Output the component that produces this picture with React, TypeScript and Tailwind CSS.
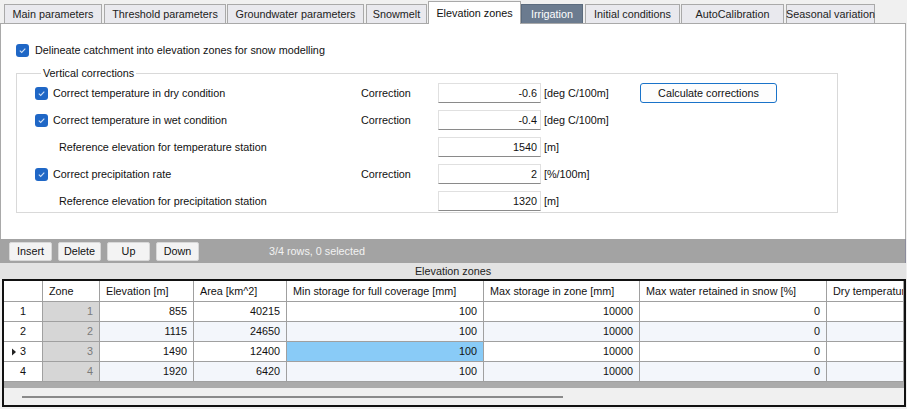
import React from "react";

const tabs = [
  { label: "Main parameters", w: 98, ml: 4 },
  { label: "Threshold parameters", w: 122, ml: 2 },
  { label: "Groundwater parameters", w: 137, ml: 1 },
  { label: "Snowmelt", w: 61, ml: 2 },
  { label: "Elevation zones", w: 93, ml: 1, active: true },
  { label: "Irrigation", w: 62, ml: 0, dark: true },
  { label: "Initial conditions", w: 95, ml: 2 },
  { label: "AutoCalibration", w: 103, ml: 1 },
  { label: "Seasonal variation", w: 89, ml: 2 },
];

function Check() {
  return (
    <span className="w-[13px] h-[13px] rounded-[3px] bg-[#1f67c6] flex items-center justify-center shrink-0">
      <svg width="9" height="9" viewBox="0 0 9 9">
        <path d="M1.8 4.6 L3.7 6.4 L7.3 2.6" fill="none" stroke="#cfe0f6" strokeWidth="1.1" />
      </svg>
    </span>
  );
}

function Input({ value }: { value: string }) {
  return (
    <div className="w-[103px] h-[20px] bg-white border border-[#e0e0e0] border-b-[#8a8a8a] flex items-center justify-end pr-[3px]">
      {value}
    </div>
  );
}

type RowProps = {
  checked?: boolean;
  label: string;
  correction?: boolean;
  value: string;
  unit: string;
  button?: boolean;
};

function ParamRow({ checked, label, correction, value, unit, button }: RowProps) {
  return (
    <div className="flex items-center h-[20px]">
      <div className="w-[326px] flex items-center">
        {checked ? (
          <>
            <Check />
            <span className="ml-[5px]">{label}</span>
          </>
        ) : (
          <span className="ml-[24px]">{label}</span>
        )}
      </div>
      <div className="w-[77px]">{correction ? "Correction" : ""}</div>
      <Input value={value} />
      <div className="w-[99px] pl-[3px]">{unit}</div>
      {button && (
        <div className="w-[137px] h-[20px] rounded-[3px] border border-[#1a73c9] bg-[#fdfdfd] flex items-center justify-center">
          Calculate corrections
        </div>
      )}
    </div>
  );
}

const cols = [
  { title: "", w: 39 },
  { title: "Zone", w: 57 },
  { title: "Elevation [m]", w: 94 },
  { title: "Area [km^2]", w: 93 },
  { title: "Min storage for full coverage [mm]", w: 197 },
  { title: "Max storage in zone [mm]", w: 156 },
  { title: "Max water retained in snow [%]", w: 187 },
  { title: "Dry temperature", w: 77 },
];

const rows = [
  ["1", "1", "855", "40215", "100", "10000", "0", ""],
  ["2", "2", "1115", "24650", "100", "10000", "0", ""],
  ["3", "3", "1490", "12400", "100", "10000", "0", ""],
  ["4", "4", "1920", "6420", "100", "10000", "0", ""],
];

function ToolBtn({ label, w }: { label: string; w: number }) {
  return (
    <div
      className="h-[19px] rounded-[2px] bg-[#f3f3f3] border border-[#d8d8d8] flex items-center justify-center"
      style={{ width: w }}
    >
      {label}
    </div>
  );
}

export default function App() {
  return (
    <div
      className="w-[907px] h-[409px] bg-[#f0f0f0] flex flex-col text-[10.8px] text-[#111] overflow-hidden"
      style={{ fontFamily: '"Liberation Sans", Arial, sans-serif' }}
    >
      {/* Tabs */}
      <div className="h-[23px] flex items-end relative z-10">
        {tabs.map((t) => (
          <div
            key={t.label}
            className={
              t.active
                ? "h-[23px] -mb-px bg-white border border-b-0 border-[#a9a9a9] flex items-center justify-center pt-[1px] whitespace-nowrap"
                : t.dark
                ? "h-[19px] bg-[#6b7b8f] text-white border border-b-0 border-[#5b6b7e] flex items-center justify-center whitespace-nowrap"
                : "h-[19px] bg-[#e9e9ee] text-[#222] border border-b-0 border-[#a9a9a9] flex items-center justify-center whitespace-nowrap"
            }
            style={{ width: t.w, marginLeft: t.ml }}
          >
            {t.label}
          </div>
        ))}
      </div>

      {/* Panel */}
      <div className="h-[216px] w-[906px] bg-white border border-b-0 border-[#a9a9a9] pl-[15px] pt-[20px]">
        <div className="flex items-center h-[13px]">
          <Check />
          <span className="ml-[6px]">Delineate catchment into elevation zones for snow modelling</span>
        </div>
        <fieldset className="mt-[8px] w-[822px] h-[148px] border border-[#d9d9d9] pl-[18px] pt-[2px]">
          <legend className="ml-[6px] px-[2px]">Vertical corrections</legend>
          <div className="flex flex-col gap-[7px]">
            <ParamRow checked label="Correct temperature in dry condition" correction value="-0.6" unit="[deg C/100m]" button />
            <ParamRow checked label="Correct temperature in wet condition" correction value="-0.4" unit="[deg C/100m]" />
            <ParamRow label="Reference elevation for temperature station" value="1540" unit="[m]" />
            <ParamRow checked label="Correct precipitation rate" correction value="2" unit="[%/100m]" />
            <ParamRow label="Reference elevation for precipitation station" value="1320" unit="[m]" />
          </div>
        </fieldset>
      </div>

      {/* Toolbar */}
      <div className="h-[24px] w-[906px] bg-[#a3a3a3] border-r border-[#8c8c9c] flex items-center pl-[9px] gap-[6px]">
        <ToolBtn label="Insert" w={43} />
        <ToolBtn label="Delete" w={43} />
        <ToolBtn label="Up" w={43} />
        <ToolBtn label="Down" w={43} />
        <span className="ml-[64px] text-[#f2f2f2]">3/4 rows, 0 selected</span>
      </div>

      {/* Caption */}
      <div className="h-[16px] w-[906px] bg-[#e3e3e3] flex items-center justify-center text-[#222]">
        Elevation zones
      </div>

      {/* Grid */}
      <div className="ml-[2px] w-[904px] h-[128px] border-2 border-[#111] bg-white flex flex-col overflow-hidden">
        <div className="flex h-[21px] border-b border-[#a0a0a0] shrink-0">
          {cols.map((c, i) => (
            <div
              key={i}
              className="h-full border-r border-[#a0a0a0] flex items-center pl-[6px] whitespace-nowrap overflow-hidden shrink-0"
              style={{ width: c.w }}
            >
              {c.title}
            </div>
          ))}
        </div>
        {rows.map((r, ri) => (
          <div key={ri} className="flex h-[20px] border-b border-[#a0a0a0] shrink-0">
            {r.map((v, ci) => {
              const stripe = ri % 2 === 1;
              let cls = "h-full border-r border-[#a0a0a0] flex items-center shrink-0 ";
              if (ci === 0) cls += "bg-white justify-center";
              else if (ci === 1) cls += "bg-[#d6d6d6] text-[#7a7a7a] justify-end pr-[6px]";
              else if (ri === 2 && ci === 4) cls += "bg-[#89cbf7] justify-end pr-[6px]";
              else cls += (stripe ? "bg-[#f3f6fb]" : "bg-white") + " justify-end pr-[6px]";
              return (
                <div key={ci} className={cls} style={{ width: cols[ci].w }}>
                  {ci === 0 && ri === 2 ? (
                    <span className="flex items-center">
                      <svg width="6" height="8" viewBox="0 0 6 8" className="mr-[3px] -ml-[9px]">
                        <path d="M1 0.5 L5 4 L1 7.5 Z" fill="#222" />
                      </svg>
                      {v}
                    </span>
                  ) : (
                    v
                  )}
                </div>
              );
            })}
          </div>
        ))}
        <div className="h-[6px] bg-[#ababab] shrink-0" />
        <div className="flex-1 bg-[#f0f0f0] flex items-center pl-[18px]">
          <div className="w-[541px] h-[2px] bg-[#8a8a8a]" />
        </div>
      </div>
    </div>
  );
}
